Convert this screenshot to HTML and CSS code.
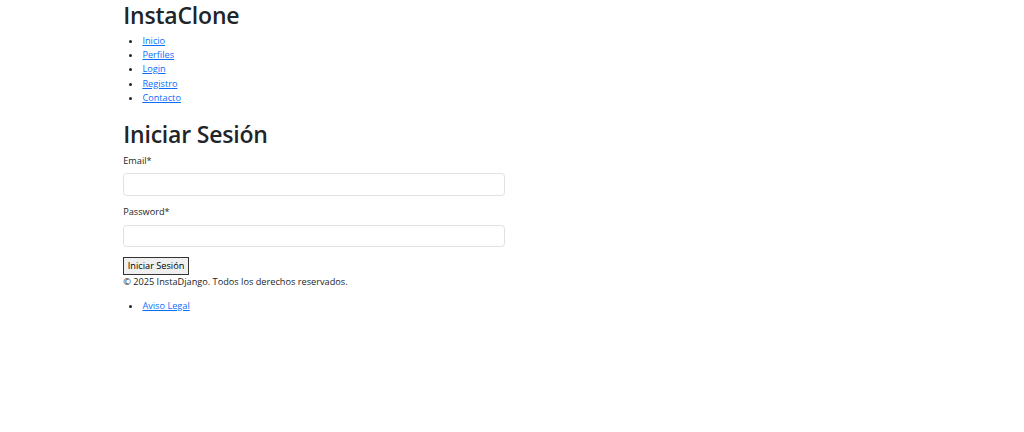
FILE: index.html
```html
<!DOCTYPE html>
<html lang="es">
<head>
    <meta charset="UTF-8">
    <meta name="viewport" content="width=device-width, initial-scale=1.0">
    <title>InstaClone</title>
    <link rel="stylesheet" href="styles.css">
</head>
<body>

<div class="container">
    <header>
        <h1>InstaClone</h1>
        <nav>
            <ul>
                <li><a href="#">Inicio</a></li>
                <li><a href="#">Perfiles</a></li>
                <li><a href="#">Login</a></li>
                <li><a href="#">Registro</a></li>
                <li><a href="#">Contacto</a></li>
            </ul>
        </nav>
    </header>

    <main>
        <h1>Iniciar Sesión</h1>
        <div class="row">
            <div class="col-6">
                <form class="login-form">
                    <div class="form-group">
                        <label for="email" class="form-label">Email*</label>
                        <input type="email" id="email" name="email" class="form-control" required>
                    </div>
                    <div class="form-group">
                        <label for="password" class="form-label">Password*</label>
                        <input type="password" id="password" name="password" class="form-control" required>
                    </div>
                    <button type="submit" class="btn-login">Iniciar Sesión</button>
                </form>
            </div>
        </div>
    </main>

    <footer>
        <p>© 2025 InstaDjango. Todos los derechos reservados.</p>
        <ul>
            <li><a href="#">Aviso Legal</a></li>
        </ul>
    </footer>
</div>

</body>
</html>
```

FILE: styles.css
```css
body {
    font-family: "Open Sans", "Noto Sans", Arial, sans-serif;
    font-size: 9.2px;
    line-height: 14.4px;
    color: #212529;
    background-color: #fff;
    margin: 0;
}

.container {
    max-width: 792px;
    margin: 0 auto;
    padding: 0 7.2px;
    box-sizing: border-box;
}

h1 {
    font-size: 23px;
    font-weight: 600;
    line-height: 28.8px;
    margin: 0 0 4.8px 0;
    letter-spacing: -0.2px;
}

header h1 {
    padding-top: 1px;
    margin-bottom: 3.8px;
}

main {
    padding-top: 5px;
}

ul {
    margin: 0 0 9.6px 0;
    padding-left: 19.2px;
}

li {
    height: 14.4px;
}

a {
    color: #0d6efd;
    text-decoration: underline;
}

p {
    margin: 0 0 9.6px 0;
}

.row {
    display: flex;
    margin: 0 -7.2px;
}

.col-6 {
    width: 50%;
    padding: 0 7.2px;
    box-sizing: border-box;
}

.form-group {
    margin-bottom: 9.6px;
}

.form-label {
    display: block;
    margin-bottom: 4.8px;
}

.form-control {
    display: block;
    width: 100%;
    height: 22.8px;
    padding: 3.6px 7.2px;
    font: inherit;
    border: 0.6px solid #dee2e6;
    border-radius: 3.6px;
    box-sizing: border-box;
    background-color: #fff;
}

.btn-login {
    font: inherit;
    line-height: 14.4px;
    height: 18px;
    padding: 0 3.6px;
    color: #000;
    background-color: #efefef;
    border: 1.2px solid #333;
    border-radius: 0;
}
```
